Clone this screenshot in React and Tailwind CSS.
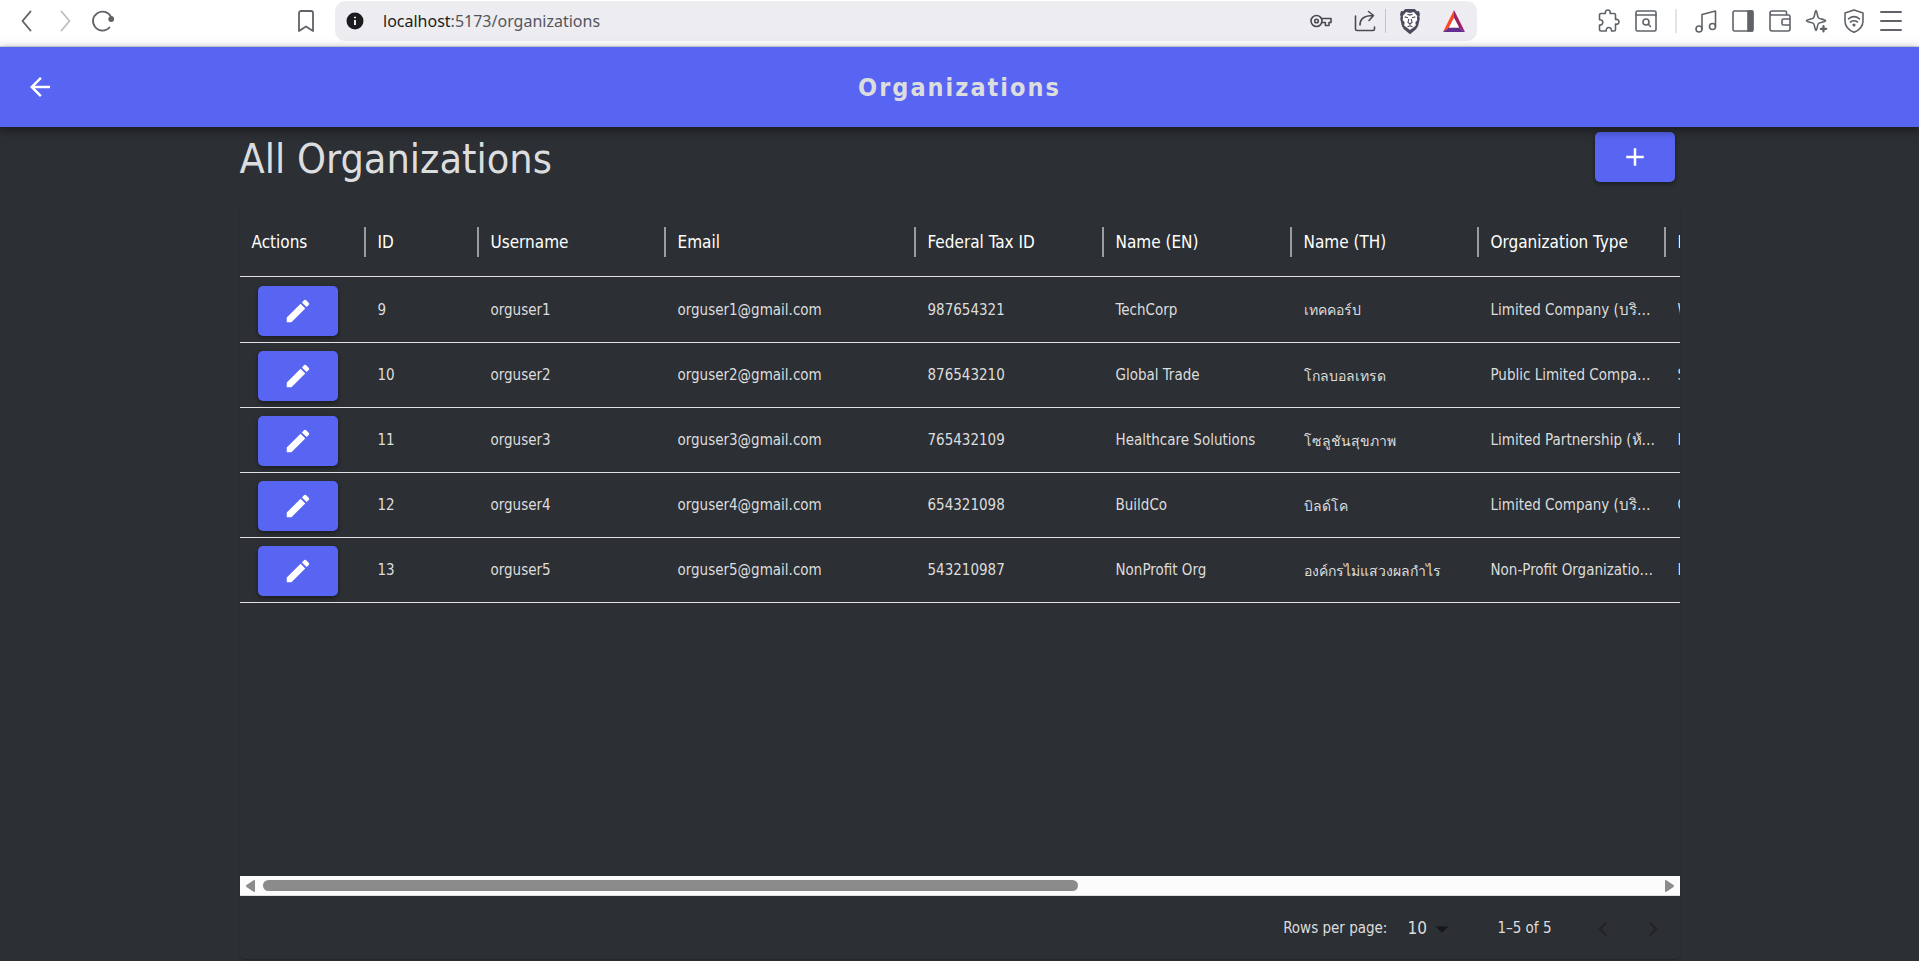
import { MdArrowBack, MdAdd, MdEdit, MdArrowDropDown, MdChevronLeft, MdChevronRight } from "react-icons/md";

const columns = [
  { label: "Actions", width: "w-[126px]" },
  { label: "ID", width: "w-[113px]" },
  { label: "Username", width: "w-[187px]" },
  { label: "Email", width: "w-[250px]" },
  { label: "Federal Tax ID", width: "w-[188px]" },
  { label: "Name (EN)", width: "w-[188px]" },
  { label: "Name (TH)", width: "w-[187px]" },
  { label: "Organization Type", width: "w-[187px]" },
  { label: "Industry", width: "w-[188px]" },
];

const rows = [
  ["9", "orguser1", "orguser1@gmail.com", "987654321", "TechCorp", "เทคคอร์ป", "Limited Company (บริษัทจำกัด)", "Web Services"],
  ["10", "orguser2", "orguser2@gmail.com", "876543210", "Global Trade", "โกลบอลเทรด", "Public Limited Company (บริษัทมหาชนจำกัด)", "Shipping"],
  ["11", "orguser3", "orguser3@gmail.com", "765432109", "Healthcare Solutions", "โซลูชันสุขภาพ", "Limited Partnership (ห้างหุ้นส่วนจำกัด)", "Healthcare"],
  ["12", "orguser4", "orguser4@gmail.com", "654321098", "BuildCo", "บิลด์โค", "Limited Company (บริษัทจำกัด)", "Construction"],
  ["13", "orguser5", "orguser5@gmail.com", "543210987", "NonProfit Org", "องค์กรไม่แสวงผลกำไร", "Non-Profit Organization (องค์กรไม่แสวงหากำไร)", "Education"],
];

const THAI_NAME = 5;

function Icon({ children, className = "size-6", width = 1.6, box = 24 }) {
  return (
    <svg viewBox={`0 0 ${box} ${box}`} className={className} fill="none" stroke="currentColor" strokeWidth={width} strokeLinecap="round" strokeLinejoin="round" aria-hidden="true">
      {children}
    </svg>
  );
}

function BarButton({ label, children, className = "" }) {
  return (
    <button type="button" aria-label={label} className={`flex shrink-0 items-center justify-center ${className}`}>
      {children}
    </button>
  );
}

function BrowserBar() {
  return (
    <div className="flex h-[47px] items-start border-b border-[#dcdce4] bg-white text-[#5f6368]">
      <div className="flex h-[42px] w-[335px] shrink-0 items-center pl-[15px]">
        <BarButton label="Back" className="w-6"><Icon width={1.9}><path d="M15.500 2.500 7.500 12 15.500 21.500" /></Icon></BarButton>
        <BarButton label="Forward" className="ml-[14px] w-6 text-[#bdbfc3]"><Icon width={1.9}><path d="M8.500 2.500 16.500 12 8.500 21.500" /></Icon></BarButton>
        <BarButton label="Reload" className="ml-[14px] w-6">
          <Icon width={1.8}><path d="M18.500 18.500A9.500 9.500 0 1 1 20 7.800" /><circle cx="20.200" cy="10" r="2" fill="currentColor" /></Icon>
        </BarButton>
        <BarButton label="Bookmark this page" className="mr-[17px] ml-auto w-6">
          <Icon width={1.8}><path d="M5 22V4a2 2 0 0 1 2-2h10a2 2 0 0 1 2 2v18l-7-4.500z" /></Icon>
        </BarButton>
      </div>
      <div className="mt-px flex h-10 w-[1142px] items-center rounded-[10px] bg-[#ededf1] pl-[11px]">
        <svg viewBox="0 0 18 18" className="size-[18px]" aria-hidden="true">
          <circle cx="9" cy="9" r="8.500" fill="#1c1c20" /><path d="M9 8v5M9 4.700v1.600" stroke="#fff" strokeWidth="1.800" />
        </svg>
        <div className="ml-[19px] grow text-base [font-family:'Noto_Sans','Open_Sans',sans-serif]">
          <span className="text-[#1c1c20]">localhost</span><span className="text-[#55555d]">:5173/organizations</span>
        </div>
        <BarButton label="Passwords" className="w-6 text-[#4a4a52]">
          <Icon><circle cx="8.500" cy="12" r="5.500" /><circle cx="8.500" cy="12" r="1.800" /><path d="M13.500 9.500H23v4h-2v3h-3.600v-3h-3.900" /></Icon>
        </BarButton>
        <BarButton label="Share" className="ml-[21px] w-6 text-[#4a4a52]">
          <Icon><path d="M2.500 7v13a1.500 1.500 0 0 0 1.500 1.500h16a1.500 1.500 0 0 0 1.500-1.500v-2M7 16c0-6 4-9.500 13-9.500M15.500 2.500l5 4-4.500 5" /></Icon>
        </BarButton>
        <span className="ml-2 h-6 w-px bg-[#c4c4cc]" />
        <BarButton label="Shields" className="ml-3 w-6">
          <svg viewBox="0 0 24 26" className="h-[27px] w-6" aria-hidden="true">
            <path d="M7.200.5h9.600l2.200 2.300 2-.2 1 3.300-.7 2 .5 2.300-1.700 7.300-2 3.200L12 25.700l-6.100-5-2-3.200-1.700-7.300.5-2.300-.7-2 1-3.300 2 .2z" fill="#4b4b5e" />
            <path d="M8.200 3.600 12 4.400l3.800-.8L19.300 7.400l-.4 1.600.4 2.400-2 2.600.6 3L12 21.600 6.100 17l.6-3-2-2.600.4-2.400-.4-1.600z" fill="#fff" />
            <path d="M6.700 8.400l3.300.9M17.300 8.400l-3.300.9M10.800 10.500l-.8 3.400 2 1.400 2-1.400-.8-3.400M12 15.500v1.700M9.500 18.300l2.500-1.100 2.500 1.100M9.500 5.800l2.500.8 2.500-.8" fill="none" stroke="#4b4b5e" strokeWidth="1.100" />
          </svg>
        </BarButton>
        <BarButton label="Rewards" className="mr-[11px] ml-5 w-6">
          <svg viewBox="0 0 24 24" className="size-6" aria-hidden="true">
            <path d="M12 1 1 23l6-4.500L12 9z" fill="#ff4724" /><path d="M12 1l11 22-6-4.500L12 9z" fill="#9e1f63" /><path d="M1 23h22l-6-4.500H7z" fill="#662d91" /><path d="M12 9l5 9.500H7z" fill="#fff" />
          </svg>
        </BarButton>
      </div>
      <div className="flex h-[42px] grow items-center justify-end gap-[13px] pr-4">
        <BarButton label="Extensions"><Icon><path d="M4 4.500h4.500c-.6-2 .6-3.500 2.300-3.500s2.900 1.500 2.300 3.500H17A1.500 1.500 0 0 1 18.500 6v4.500c2.200-.5 3.500.7 3.500 2.300s-1.300 2.800-3.500 2.300v5.400A1.500 1.500 0 0 1 17 22h-2.500c.2-2.300-1-3.500-2.700-3.500S9 19.700 9.200 22H4a1.500 1.500 0 0 1-1.500-1.500V16c2.200.2 3.300-1 3.300-2.700s-1.100-2.800-3.300-2.600V6A1.500 1.500 0 0 1 4 4.500z" /></Icon></BarButton>
        <BarButton label="Search tabs"><Icon><rect x="2" y="2" width="20" height="20" rx="1.500" /><path d="M2 6h20M14.300 15.300l2.200 2.200" /><circle cx="12" cy="13" r="3" /></Icon></BarButton>
        <span className="mx-1 h-6 w-0.5 bg-[#e3e3e8]" />
        <BarButton label="Media"><Icon><circle cx="5" cy="20" r="3" /><circle cx="18.500" cy="17.500" r="3" /><path d="M8 20V5.500L21.500 2v15.500" /></Icon></BarButton>
        <BarButton label="Side panel"><Icon><rect x="2" y="2" width="20" height="20" rx="1.500" /><path d="M17 2h4.500v20H17z" fill="currentColor" /></Icon></BarButton>
        <BarButton label="Wallet"><Icon><path d="M2 4v16a2 2 0 0 0 2 2h16a2 2 0 0 0 2-2V7.500A1.500 1.500 0 0 0 20.500 6H4a2 2 0 0 1 0-4h13a1.500 1.500 0 0 1 1.500 1.500V6M22 10h-6.500A1.500 1.500 0 0 0 14 11.500v3a1.500 1.500 0 0 0 1.500 1.500H22" /></Icon></BarButton>
        <BarButton label="Assistant"><Icon><path d="M11 1.500c1 0 1.300 6.500 2.500 7.500s7 1.500 7 2.800-5.800 1.500-7 2.700S12 21.500 11 21.500s-1.300-5.800-2.500-7-7-1.500-7-2.700S7.300 10.200 8.500 9 10 1.500 11 1.500z" /><path d="M18.500 17v5.500M15.800 19.800h5.400" strokeWidth="2.200" /></Icon></BarButton>
        <BarButton label="VPN"><Icon><path d="M12 .9 21 4v8c0 5-3.500 9-9 11.300C6.500 21 3 17 3 12V4z" /><path d="M6.500 9.800c3.300-2.600 7.700-2.600 11 0M8.500 13c2.200-1.600 4.800-1.600 7 0" /><circle cx="12" cy="16" r=".8" fill="currentColor" /></Icon></BarButton>
        <BarButton label="Menu"><Icon width={1.9}><path d="M2 3h20M2 12h20M2 21h20" /></Icon></BarButton>
      </div>
    </div>
  );
}

const raised = "flex h-[50px] w-20 items-center justify-center rounded-[5px] bg-[#5865f2] text-white shadow-[0_2px_4px_rgba(0,0,0,0.4)]";

function OrganizationsTable() {
  return (
    <div className="overflow-hidden">
      <table className="w-[1614px] table-fixed border-separate border-spacing-0 text-left">
        <thead>
          <tr>
            {columns.map((column, i) => (
              <th key={column.label} scope="col" className={`${column.width} h-[71px] border-b border-[#e0e0e0] p-0 pt-0.5 text-[17px] font-normal text-white`}>
                <div className="flex h-[30px] items-center">
                  <span className="grow pt-0.5 pl-3">{column.label}</span>
                  {i < columns.length - 1 && <span className="h-[30px] w-0.5 bg-[#9b9c9e]" />}
                </div>
              </th>
            ))}
          </tr>
        </thead>
        <tbody>
          {rows.map((row) => (
            <tr key={row[0]} className="first:*:h-[66px]">
              <td className="h-[65px] border-b border-[#e0e0e0] py-0 pt-0.5 pl-[18px]">
                <button type="button" aria-label={`Edit ${row[1]}`} className={raised}><MdEdit className="size-[30px]" /></button>
              </td>
              {row.map((value, i) => (
                <td key={i} className={`truncate border-b border-[#e0e0e0] pt-px pr-2 pb-0 pl-3 text-[#dcddde] ${i === THAI_NAME ? "text-sm" : "text-[15px]"}`}>{value}</td>
              ))}
            </tr>
          ))}
        </tbody>
      </table>
    </div>
  );
}

function HorizontalScrollbar() {
  return (
    <div className="flex h-5 items-center gap-2 border-b border-[#e0e0e0] bg-[#fcfcfc] px-1.5 text-[#8b8b8b]">
      <svg viewBox="0 0 9 12" className="h-3 w-[9px]" aria-hidden="true"><path d="M9 1v10q0 1-1 1L.5 7q-.8-1 0-2L8 0q1 0 1 1z" fill="currentColor" /></svg>
      <div className="grow"><div className="h-[11px] w-[58.5%] rounded-full bg-[#8b8b8b]" /></div>
      <svg viewBox="0 0 9 12" className="h-3 w-[9px]" aria-hidden="true"><path d="M0 1v10q0 1 1 1l7.500-5q.8-1 0-2L1 0Q0 0 0 1z" fill="currentColor" /></svg>
    </div>
  );
}

export default function App() {
  return (
    <div className="flex min-h-screen flex-col bg-[#2c2f33] text-[#dcddde] [font-family:'DejaVu_Sans_Condensed','Noto_Sans',sans-serif]">
      <BrowserBar />
      <header className="relative grid h-20 grid-cols-[80px_1fr_80px] items-center bg-[#5865f2] shadow-[0_3px_10px_rgba(0,0,0,0.5)]">
        <button type="button" aria-label="Go back" className="ml-[25px] flex size-[30px] items-center justify-center text-white"><MdArrowBack className="size-[30px]" /></button>
        <div className="pt-0.5 text-center text-[25px] font-bold tracking-[2px]">Organizations</div>
      </header>
      <main className="mx-auto flex w-full max-w-[1440px] grow flex-col">
        <div className="flex items-start justify-between pt-[5px] pr-[5px]">
          <h1 className="text-[41px] leading-[54px]">All Organizations</h1>
          <button type="button" aria-label="Add organization" className={raised}><MdAdd className="size-[30px]" /></button>
        </div>
        <section className="mt-5 mb-0.5 flex grow flex-col rounded-[5px] shadow-[0_1px_2px_rgba(0,0,0,0.2)]" aria-label="Organizations">
          <OrganizationsTable />
          <div className="grow" />
          <HorizontalScrollbar />
          <footer className="flex h-[63px] items-center justify-end pt-0.5 pr-3 text-[15px]">
            <label htmlFor="rows-per-page">Rows per page:</label>
            <div className="ml-5 flex items-center">
              <select id="rows-per-page" defaultValue="10" className="appearance-none bg-transparent text-[17px]">
                <option>10</option>
                <option>25</option>
                <option>50</option>
              </select>
              <MdArrowDropDown className="size-[30px] text-[#151719]" />
            </div>
            <span className="ml-10">1–5 of 5</span>
            <button type="button" disabled aria-label="Previous page" className="ml-9 text-[#212326]"><MdChevronLeft className="size-[30px]" /></button>
            <button type="button" disabled aria-label="Next page" className="ml-5 text-[#212326]"><MdChevronRight className="size-[30px]" /></button>
          </footer>
        </section>
      </main>
    </div>
  );
}
